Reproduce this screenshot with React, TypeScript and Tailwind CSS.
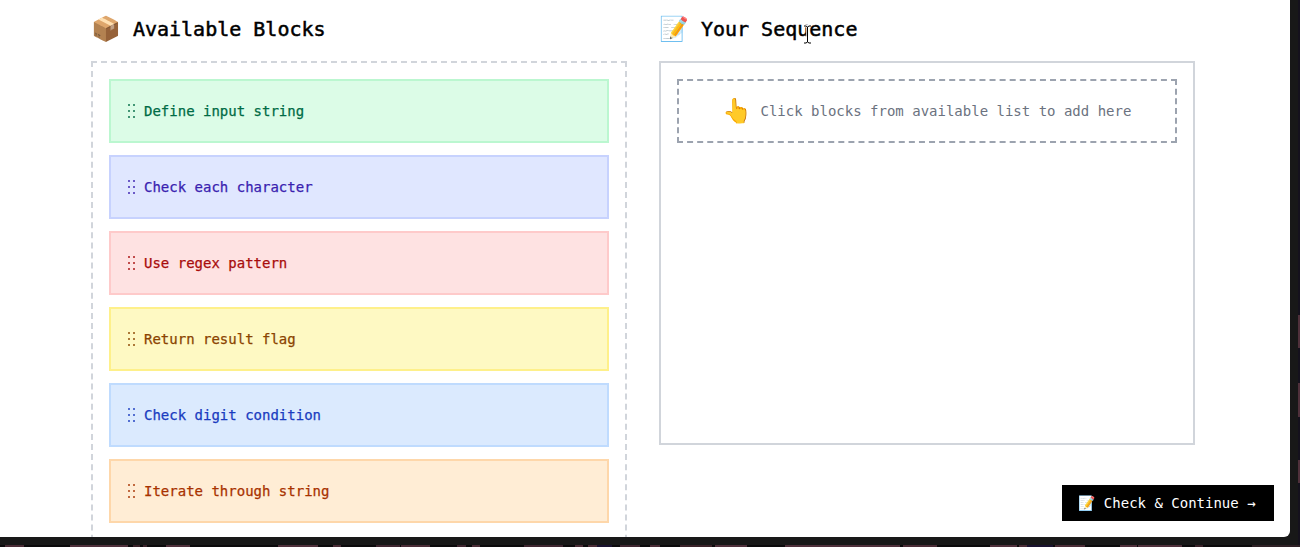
const blocks = [
  { label: 'Define input string', box: 'bg-[#dcfce7] border-[#bbf7d0] text-[#006b45]' },
  { label: 'Check each character', box: 'bg-[#e0e7ff] border-[#c7d2fe] text-[#3a1fb0]' },
  { label: 'Use regex pattern', box: 'bg-[#fee2e2] border-[#fecaca] text-[#a80c0c]' },
  { label: 'Return result flag', box: 'bg-[#fef9c3] border-[#fef08a] text-[#8a4300]' },
  { label: 'Check digit condition', box: 'bg-[#dbeafe] border-[#bfdbfe] text-[#1a3cc0]' },
  { label: 'Iterate through string', box: 'bg-[#ffedd5] border-[#fed7aa] text-[#a83200]' },
];

// wallpaper peeking out behind the window: [start, end, colour]
const bottomBits: [number, number, string][] = [
  [5, 24, '#4a2c36'], [70, 128, '#4f303b'], [133, 140, '#3a2229'], [143, 147, '#3a2229'], [166, 190, '#4f303b'], [278, 318, '#4f303b'],
  [333, 341, '#4a2c36'], [376, 400, '#3f2630'], [401, 430, '#4a2c36'], [457, 466, '#3f2630'], [472, 480, '#4a2c36'], [524, 563, '#3f2630'],
  [575, 583, '#4a2c36'], [588, 597, '#4a2c36'], [597, 612, '#1a1230'], [620, 640, '#3f2630'], [650, 660, '#4a2c36'], [680, 712, '#3a2229'],
  [715, 747, '#4f303b'], [785, 900, '#4f303b'], [903, 937, '#4a2c36'], [990, 1017, '#4f303b'], [1019, 1027, '#4a2c36'], [1027, 1053, '#1a1230'],
  [1055, 1085, '#4a2c36'], [1120, 1137, '#4f303b'], [1138, 1182, '#4f303b'], [1195, 1203, '#3a2229'], [1252, 1300, '#2e2025'],
];

const sideBits: [number, number, string][] = [
  [315, 348, '#4f303b'], [383, 417, '#4f303b'], [460, 483, '#4f303b'],
];

const emojiFont = { fontFamily: '"Noto Color Emoji", "DejaVu Sans Mono", monospace' };

function Grip() {
  return (
    <svg width="10" height="16" viewBox="0 0 10 16" className="mr-[7px] shrink-0" fill="currentColor" opacity="0.7">
      <rect x="1" y="1" width="2" height="2" />
      <rect x="6" y="1" width="2" height="2" />
      <rect x="1" y="7" width="2" height="2" />
      <rect x="6" y="7" width="2" height="2" />
      <rect x="1" y="13" width="2" height="2" />
      <rect x="6" y="13" width="2" height="2" />
    </svg>
  );
}

function Heading({ icon, title }: { icon: string; title: string }) {
  return (
    <h2 className="flex h-[61px] items-center gap-[12px] pb-[3px] text-[20px] leading-none text-black">
      <span className="text-[24px]" style={emojiFont}>{icon}</span>
      <span className="[-webkit-text-stroke:0.5px_currentColor]">{title}</span>
    </h2>
  );
}

export default function App() {
  return (
    <div className="flex h-[547px] w-[1300px] flex-col overflow-hidden bg-[#181818] font-['DejaVu_Sans_Mono',monospace]">
      <div className="flex h-[545px] shrink-0">
        <div className="w-[1298px] shrink-0">
          <div className="relative h-[537px] w-[1290px] overflow-hidden rounded-br-[6px] bg-white">
            <div className="grid grid-cols-[536px_536px] gap-x-[32px] pl-[91px]">
              {/* AVAILABLE */}
              <div>
                <Heading icon="📦" title="Available Blocks" />
                <div className="flex h-[520px] flex-col gap-[12px] border-2 border-dashed border-[#d1d5db] p-[16px]">
                  {blocks.map((b) => (
                    <div key={b.label} className={`flex h-[64px] shrink-0 items-center border-2 pl-[16px] text-[14px] ${b.box}`}>
                      <Grip />
                      <span className="[-webkit-text-stroke:0.25px_currentColor]">{b.label}</span>
                    </div>
                  ))}
                </div>
              </div>

              {/* SEQUENCE */}
              <div>
                <Heading icon="📝" title="Your Sequence" />
                <div className="h-[384px] border-2 border-[#d1d5db] p-[16px]">
                  <div className="flex h-[64px] items-center justify-center gap-[8px] border-2 border-dashed border-[#9ca3af] text-[14px] text-[#6b7280]">
                    <span className="text-[24px]" style={emojiFont}>👆</span>
                    <span>Click blocks from available list to add here</span>
                  </div>
                </div>
              </div>
            </div>

            <button className="absolute left-[1062px] top-[485px] flex h-[36px] w-[212px] items-center justify-center gap-[8px] bg-black pr-[2px] text-[14px] text-white">
              <span style={emojiFont}>📝</span>
              <span>Check &amp; Continue →</span>
            </button>

            {/* text cursor sitting over the heading */}
            <svg width="9" height="20" viewBox="0 0 9 20" className="absolute left-[803px] top-[25px]">
              <path d="M1 1h2l1.500 1L6 1h2M4.500 2v15M1 18h2l1.500-1L6 18h2" fill="none" stroke="#ffffff" strokeWidth="2.500" />
              <path d="M1 1h2l1.500 1L6 1h2M4.500 2v15M1 18h2l1.500-1L6 18h2" fill="none" stroke="#000000" strokeWidth="1" />
            </svg>
          </div>
        </div>
        <div className="relative w-[2px] shrink-0 bg-[#15111d]">
          {sideBits.map(([a, b, c]) => (
            <div key={a} className="absolute left-0 w-full" style={{ top: a, height: b - a, backgroundColor: c }} />
          ))}
        </div>
      </div>
      <div className="relative h-[2px] shrink-0 bg-[#0c0a0c]">
        {bottomBits.map(([a, b, c]) => (
          <div key={a} className="absolute top-0 h-full" style={{ left: a, width: b - a, backgroundColor: c }} />
        ))}
      </div>
    </div>
  );
}
